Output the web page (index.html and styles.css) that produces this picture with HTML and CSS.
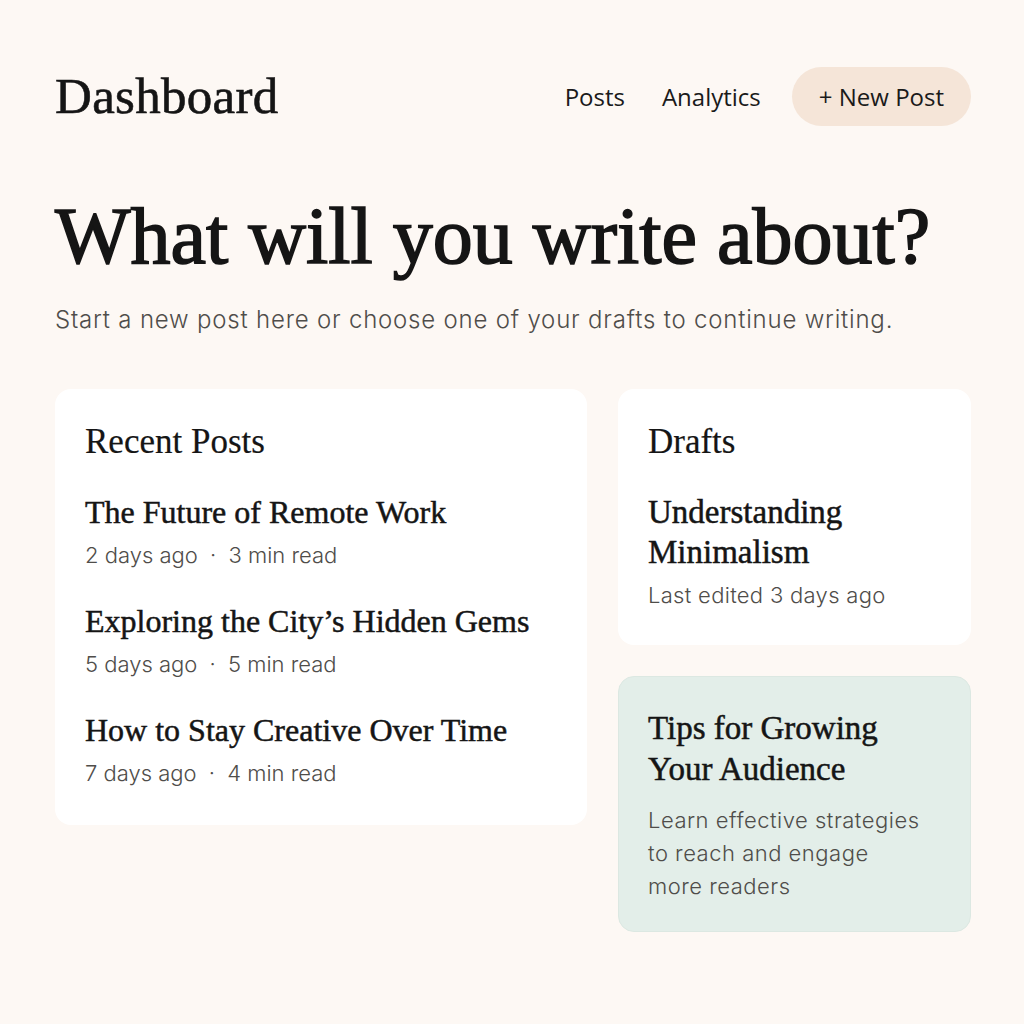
FILE: index.html
```html
<!DOCTYPE html>
<html lang="en">
<head>
<meta charset="utf-8">
<title>Dashboard</title>
<link rel="stylesheet" href="styles.css">
</head>
<body>
<div class="page">
  <header class="topbar">
    <div class="brand">Dashboard</div>
    <nav class="nav">
      <a class="nav-link" href="#">Posts</a>
      <a class="nav-link" href="#">Analytics</a>
      <a class="btn-new" href="#">+ New Post</a>
    </nav>
  </header>

  <h1 class="hero">What will you write about?</h1>
  <p class="lead">Start a new post here or choose one of your drafts to continue writing.</p>

  <div class="grid">
    <section class="card card-recent">
      <h2 class="card-title">Recent Posts</h2>
      <div class="post">
        <div class="post-title">The Future of Remote Work</div>
        <div class="meta">2 days ago <span class="dot">·</span> 3 min read</div>
      </div>
      <div class="post">
        <div class="post-title">Exploring the City’s Hidden Gems</div>
        <div class="meta">5 days ago <span class="dot">·</span> 5 min read</div>
      </div>
      <div class="post">
        <div class="post-title">How to Stay Creative Over Time</div>
        <div class="meta">7 days ago <span class="dot">·</span> 4 min read</div>
      </div>
    </section>

    <div class="side">
      <section class="card card-drafts">
        <h2 class="card-title">Drafts</h2>
        <div class="draft-title">Understanding Minimalism</div>
        <div class="meta meta-wide">Last edited 3 days ago</div>
      </section>
      <section class="card card-tips">
        <div class="tips-title">Tips for Growing Your Audience</div>
        <p class="tips-text">Learn effective strategies to reach and engage more readers</p>
      </section>
    </div>
  </div>
</div>
</body>
</html>
```

FILE: styles.css
```css
* { box-sizing: border-box; }

html, body {
  margin: 0;
  padding: 0;
  background: #fdf8f4;
  color: #151515;
}

.page {
  padding: 67px 53px 0 55px;
}

.topbar {
  display: flex;
  align-items: center;
  justify-content: space-between;
  height: 59px;
}

.brand {
  font-family: "Liberation Serif", "Times New Roman", serif;
  font-size: 51px;
  line-height: 1;
  letter-spacing: 0.3px;
  color: #151515;
  -webkit-text-stroke: 0.6px #151515;
}

.nav {
  display: flex;
  align-items: center;
}

.nav-link {
  font-family: "Open Sans", "Noto Sans", sans-serif;
  font-size: 24px;
  color: #1a1a1a;
  text-decoration: none;
  margin-right: 37px;
}

.nav-link:nth-child(2) {
  margin-right: 31px;
}

.btn-new {
  display: flex;
  align-items: center;
  height: 59px;
  padding: 0 27px;
  border-radius: 30px;
  background: #f5e5d8;
  font-family: "Open Sans", "Noto Sans", sans-serif;
  font-size: 24px;
  color: #1a1a1a;
  text-decoration: none;
}

.hero {
  margin: 62px 0 0;
  font-family: "Liberation Serif", "Times New Roman", serif;
  font-weight: normal;
  font-size: 80px;
  line-height: 96px;
  color: #151515;
  -webkit-text-stroke: 1.6px #151515;
}

.lead {
  margin: 20px 0 0;
  font-family: Inter, "Noto Sans", sans-serif;
  font-weight: 300;
  font-size: 24px;
  line-height: 32px;
  letter-spacing: 0.8px;
  color: #4f4d4a;
}

.grid {
  display: grid;
  grid-template-columns: 532px 353px;
  column-gap: 31px;
  margin-top: 53px;
  align-items: start;
}

.side {
  display: flex;
  flex-direction: column;
  gap: 31px;
}

.card {
  background: #ffffff;
  border-radius: 16px;
  padding: 31px 30px 37px 30px;
}

.card-recent {
  height: 436px;
}

.card-title {
  margin: 0;
  font-family: "Liberation Serif", "Times New Roman", serif;
  font-weight: normal;
  font-size: 35px;
  line-height: 44px;
  color: #151515;
  -webkit-text-stroke: 0.2px #151515;
}

.post {
  margin-top: 28px;
}

.post + .post {
  margin-top: 31px;
}

.post-title {
  font-family: "Liberation Serif", "Times New Roman", serif;
  font-size: 32px;
  line-height: 40px;
  color: #151515;
  -webkit-text-stroke: 0.5px #151515;
}

.meta {
  margin-top: 8px;
  font-family: Inter, "Noto Sans", sans-serif;
  font-weight: 300;
  font-size: 22px;
  line-height: 30px;
  color: #4f4d4a;
}

.dot {
  display: inline-block;
  margin: 0 6px;
}

.card-drafts {
  height: 256px;
}

.draft-title {
  margin-top: 28px;
  font-family: "Liberation Serif", "Times New Roman", serif;
  font-size: 33px;
  line-height: 40px;
  color: #151515;
  -webkit-text-stroke: 0.5px #151515;
}

.card-drafts .meta {
  margin-top: 8px;
}

.meta-wide {
  letter-spacing: 0.3px;
}

.card-tips {
  height: 256px;
  background: #e3eee9;
  border: 1px solid #dce8e2;
  padding-top: 31px;
  padding-left: 29px;
}

.tips-title {
  font-family: "Liberation Serif", "Times New Roman", serif;
  font-size: 33px;
  line-height: 41px;
  color: #151515;
  -webkit-text-stroke: 0.5px #151515;
}

.tips-text {
  margin: 14px 0 0;
  max-width: 278px;
  font-family: Inter, "Noto Sans", sans-serif;
  font-weight: 300;
  font-size: 22px;
  line-height: 33px;
  letter-spacing: 0.5px;
  color: #4f4d4a;
}
```
